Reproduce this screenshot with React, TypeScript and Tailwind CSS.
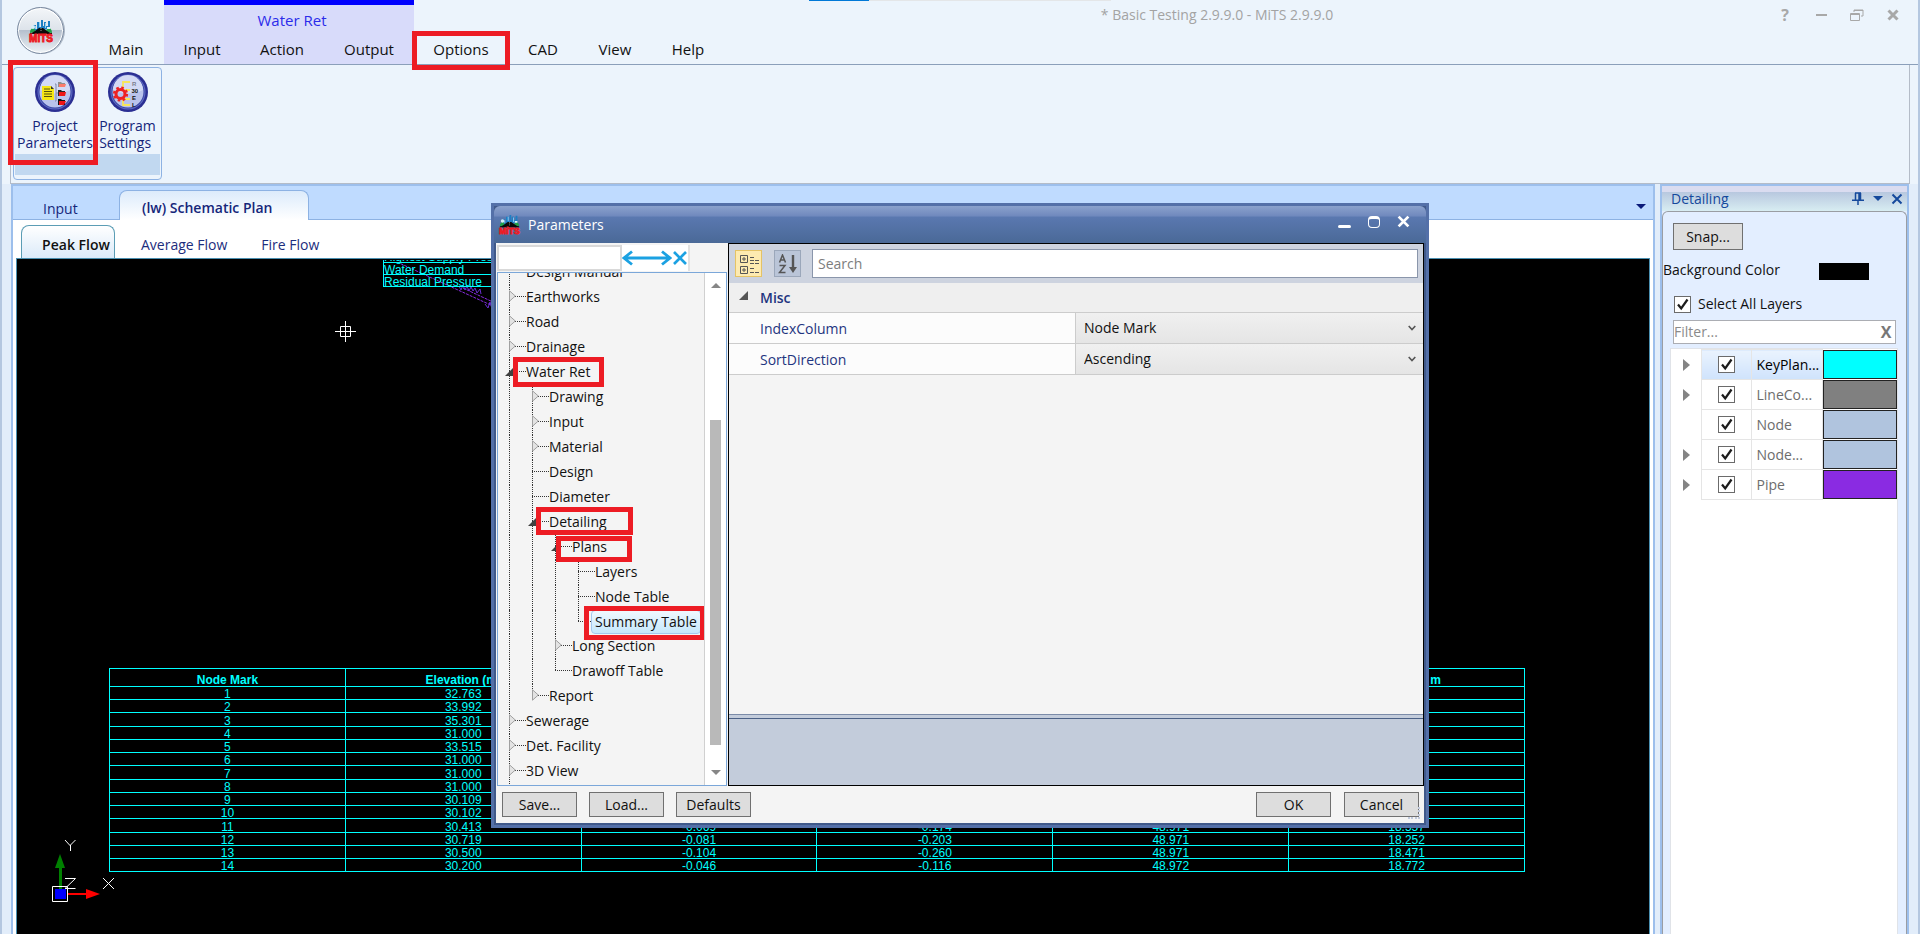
import React from 'react';

interface TreeItem {
  label: string;
  depth: number;
  state?: 'closed' | 'open';
  selected?: boolean;
  mark?: string;
  // the dotted guide of this level stops here
  last?: boolean;
  guides: number[];
}

interface Layer {
  name: string;
  color: string;
  expandable: boolean;
  selected?: boolean;
}

const treeItems: TreeItem[] = [
  { label: 'Design Manual', depth: 0, guides: [0] },
  { label: 'Earthworks', depth: 0, state: 'closed', guides: [0] },
  { label: 'Road', depth: 0, state: 'closed', guides: [0] },
  { label: 'Drainage', depth: 0, state: 'closed', guides: [0] },
  { label: 'Water Ret', depth: 0, state: 'open', guides: [0], mark: '-left-[13px] -top-[3px] w-[91px] h-[30px]' },
  { label: 'Drawing', depth: 1, state: 'closed', guides: [0, 1] },
  { label: 'Input', depth: 1, state: 'closed', guides: [0, 1] },
  { label: 'Material', depth: 1, state: 'closed', guides: [0, 1] },
  { label: 'Design', depth: 1, guides: [0, 1] },
  { label: 'Diameter', depth: 1, guides: [0, 1] },
  { label: 'Detailing', depth: 1, state: 'open', guides: [0, 1], mark: '-left-[13px] -top-[3px] w-[97px] h-[28px]' },
  { label: 'Plans', depth: 2, state: 'open', guides: [0, 1, 2], mark: '-left-[16px] top-px w-[76px] h-[26px]' },
  { label: 'Layers', depth: 3, guides: [0, 1, 2, 3] },
  { label: 'Node Table', depth: 3, guides: [0, 1, 2, 3] },
  { label: 'Summary Table', depth: 3, guides: [0, 1, 2, 3], last: true, selected: true, mark: '-left-[11px] -top-[4px] w-[121px] h-[34px]' },
  { label: 'Long Section', depth: 2, state: 'closed', guides: [0, 1, 2] },
  { label: 'Drawoff Table', depth: 2, guides: [0, 1, 2], last: true },
  { label: 'Report', depth: 1, state: 'closed', guides: [0, 1], last: true },
  { label: 'Sewerage', depth: 0, state: 'closed', guides: [0] },
  { label: 'Det. Facility', depth: 0, state: 'closed', guides: [0] },
  { label: '3D View', depth: 0, state: 'closed', guides: [0] },
];

const layers: Layer[] = [
  { name: 'KeyPlan...', color: '#00ffff', expandable: true, selected: true },
  { name: 'LineCo...', color: '#808080', expandable: true },
  { name: 'Node', color: '#b0c4de', expandable: false },
  { name: 'Node...', color: '#b0c4de', expandable: true },
  { name: 'Pipe', color: '#8a2be2', expandable: true },
];

const summaryHead = ['Node Mark', 'Elevation (m)', '', '', '', 'Pressure, m'];

const summaryRows = [
  ['1', '32.763', '', '', '', ''],
  ['2', '33.992', '', '', '', ''],
  ['3', '35.301', '', '', '', ''],
  ['4', '31.000', '', '', '', ''],
  ['5', '33.515', '', '', '', ''],
  ['6', '31.000', '', '', '', ''],
  ['7', '31.000', '', '', '', ''],
  ['8', '31.000', '', '', '', ''],
  ['9', '30.109', '', '', '', ''],
  ['10', '30.102', '', '', '', ''],
  ['11', '30.413', '-0.069', '-0.174', '48.971', '18.557'],
  ['12', '30.719', '-0.081', '-0.203', '48.971', '18.252'],
  ['13', '30.500', '-0.104', '-0.260', '48.971', '18.471'],
  ['14', '30.200', '-0.046', '-0.116', '48.972', '18.772'],
];

const Highlight: React.FC<{ className: string }> = ({ className }) => (
  <span className={`absolute z-10 border-[5px] border-[#ed1c24] pointer-events-none ${className}`} />
);

const MitsLogo: React.FC<{ className?: string }> = ({ className }) => (
  <svg viewBox="0 0 22 24" className={`overflow-visible ${className ?? ''}`} aria-hidden="true">
    <path d="M3 12V6h3v4h1V3h3v5h1V1h2v6h1V3h2v4h2V2h2v8z" fill="#1d7fc4" />
    <path d="M9 3h1v5H9zM15 4h1v5h-1zM5 7h1v3H5z" fill="#8fd0f2" />
    <path d="M0 14c0-4 2-5 4-5l2 4zM22 14c0-4-2-5-4-5l-3 4z" fill="#20a04a" />
    <circle cx="3" cy="8" r="2" fill="#d9eef7" />
    <path d="M17 8h3v2h-3z" fill="#dff3fb" />
    <path d="M0 15l5-3 4-3h4l4 3 5 3z" fill="#0b0b0b" />
    <path d="M11 9v5" stroke="#fff" strokeWidth="0.6" strokeDasharray="1 1" />
    <path d="M0 14h5l3-1h6l3 1h5v1H0z" fill="#0b0b0b" />
    <text x="11" y="23" textAnchor="middle" fontFamily="Liberation Sans Narrow, Liberation Sans, sans-serif" fontWeight="bold" fontSize="10" fill="#ed1c24" stroke="#ed1c24" strokeWidth="0.9">MiTS</text>
  </svg>
);

const ParametersIcon = () => (
  <svg viewBox="0 0 40 40" className="w-10 h-10" aria-hidden="true">
    <circle cx="20" cy="20" r="20" fill="#2b2f93" />
    <circle cx="20" cy="20" r="17.5" fill="#5f6dc4" />
    <circle cx="20" cy="20" r="16.5" fill="#3a45a5" />
    <circle cx="20" cy="20" r="15.5" fill="#b9c3ec" />
    <path d="M5 18a15 15 0 0 1 30 0c-8 4-20 5-30 0z" fill="#d3daf5" />
    <path d="M7 14h9l3 3v11H7z" fill="#f5e614" />
    <path d="M16 14v3h3z" fill="#333" />
    <path d="M9 17h6M9 19.500h8M9 22h8M9 24.500h8" stroke="#54500c" strokeWidth="1" />
    <path d="M21 12v17M21 12h-1M21 21h2M21 29h-1" stroke="#8088a8" strokeWidth="1" fill="none" />
    <path d="M23 10h3l1 1h3v4h-7z" fill="#8f8f8f" />
    <path d="M24 12h7l-1 3h-6z" fill="#fb7b6b" />
    <path d="M23 18h3l1 1h3v5h-7z" fill="#222" />
    <path d="M24 20h7l-1 4h-6z" fill="#ee1515" />
    <path d="M23 27h3l1 1h3v5h-7z" fill="#111" />
    <path d="M24 29h7l-2 4h-5z" fill="#ee1515" />
  </svg>
);

const SettingsIcon = () => (
  <svg viewBox="0 0 40 40" className="w-10 h-10" aria-hidden="true">
    <circle cx="20" cy="20" r="20" fill="#2b2f93" />
    <circle cx="20" cy="20" r="17.5" fill="#5f6dc4" />
    <circle cx="20" cy="20" r="16.5" fill="#3a45a5" />
    <circle cx="20" cy="20" r="15.5" fill="#b9c3ec" />
    <path d="M5 18a15 15 0 0 1 30 0c-8 4-20 5-30 0z" fill="#d3daf5" />
    <path d="M22 10h-7v6M22 18h-5M22 27h-6M22 33h-7v-7" stroke="#f7e65a" strokeWidth="1.800" fill="none" />
    <circle cx="12.500" cy="22" r="4.500" fill="none" stroke="#ee2222" strokeWidth="3" />
    <circle cx="12.500" cy="22" r="6.500" fill="none" stroke="#ee2222" strokeWidth="2.200" strokeDasharray="2.600 2.500" />
    <g fontFamily="Liberation Sans, sans-serif" fontWeight="bold" fontSize="6" fill="#111">
      <text x="24" y="13.500" fill="#7d8090">R</text>
      <text x="23.500" y="21">30</text>
      <text x="24" y="27.500">E</text>
      <text x="24" y="34.500">L</text>
    </g>
  </svg>
);

const CheckBox: React.FC<{ label?: string; id: string }> = ({ label, id }) => (
  <span className="relative inline-flex w-[17px] h-[17px] shrink-0">
    <input id={id} type="checkbox" defaultChecked aria-label={label} className="appearance-none w-full h-full bg-white border border-[#6b6b6b]" />
    <svg viewBox="0 0 17 17" className="absolute inset-0 pointer-events-none" aria-hidden="true">
      <path d="M4 8.500l3.200 4L13.500 3.500" fill="none" stroke="#1c1c1c" strokeWidth="2.200" />
    </svg>
  </span>
);

const Caret: React.FC<{ className?: string }> = ({ className }) => (
  <svg viewBox="0 0 10 5" className={`w-2.5 h-[5px] ${className ?? ''}`} aria-hidden="true">
    <path d="M0 0h10L5 5z" fill="currentColor" />
  </svg>
);

const Cross: React.FC<{ className?: string; width?: number }> = ({ className, width = 2 }) => (
  <svg viewBox="0 0 12 12" className={className} aria-hidden="true">
    <path d="M1.500 1.500l9 9M10.500 1.500l-9 9" fill="none" stroke="currentColor" strokeWidth={width} />
  </svg>
);

const TitleBar = () => (
  <header className="relative flex items-end h-[65px] shrink-0 border-b border-[#8b9fba] text-[15px] text-[#111]">
    <button aria-label="Application menu" className="absolute left-[15px] top-[7px] w-[47px] h-[47px] rounded-full border border-[#75859c] bg-[linear-gradient(#f3f6f9,#dde3ea_49%,#b5c0ce_50%,#eef3f7)] shadow-[inset_0_0_0_1px_#ffffff,1px_0_0_#a9b4c2] flex items-center justify-center">
      <MitsLogo className="w-[22px] h-6" />
    </button>
    <nav className="flex items-end h-full pl-[86px]">
      <button className="w-[76px] h-8 pt-0.5">Main</button>
      <div className="flex flex-col h-full border-t-[5px] border-[#0000fe] bg-[#d8dbfa]">
        <div className="flex-1 flex items-center justify-center pt-1 pl-1.5 text-[#2b2bea]">Water Ret</div>
        <div className="flex">
          <button className="w-[76px] h-8 pt-0.5">Input</button>
          <button className="w-[84px] h-8 pt-0.5">Action</button>
          <button className="w-[90px] h-8 pt-0.5">Output</button>
        </div>
      </div>
      <button className="relative w-[94px] h-8 pt-0.5">
        Options
        <Highlight className="-left-[2px] -top-px w-[98px] h-[39px]" />
      </button>
      <button className="w-[70px] h-8 pt-0.5">CAD</button>
      <button className="w-[74px] h-8 pt-0.5">View</button>
      <button className="w-[72px] h-8 pt-0.5">Help</button>
    </nav>
    <div className="absolute left-[807px] right-[807px] top-0 h-px bg-[#e4e6e8]">
      <div className="w-[60px] h-full bg-[#0078d7]" />
    </div>
    <h1 className="absolute inset-x-0 top-[5px] pl-[514px] text-center text-sm text-[#a3a3a3] pointer-events-none">* Basic Testing 2.9.9.0 - MiTS 2.9.9.0</h1>
    <div className="absolute right-[17px] top-[7px] flex items-center gap-5 text-[#a8a8a8]">
      <button aria-label="Help" className="w-4 h-4 flex items-center justify-center text-base leading-4 font-bold">?</button>
      <button aria-label="Minimize" className="w-4 h-4 flex items-center justify-center"><span className="w-[11px] h-[2px] bg-[#a8a8a8]" /></button>
      <button aria-label="Restore" className="w-4 h-4 flex items-center justify-center">
        <svg viewBox="0 0 14 13" className="w-[14px] h-[13px]" fill="none" stroke="currentColor">
          <path d="M4 3V1h9v6h-2M4 1.500h9" />
          <path d="M.5 4.500h9v7h-9zM.5 5.500h9" />
        </svg>
      </button>
      <button aria-label="Close" className="w-4 h-4 flex items-center justify-center"><Cross className="w-3 h-3" width={3} /></button>
    </div>
  </header>
);

const Ribbon = () => (
  <section className="mx-2 h-[119px] shrink-0 border-x border-b border-[#b4bcc8] pl-[2px] pt-[2px] flex items-start">
    <div className="flex flex-col h-[113px] border border-[#8db2e3] rounded p-px pb-1 text-sm leading-[17px] text-[#15267a]">
      <div className="flex flex-1">
        <button className="relative w-20 flex flex-col items-center pt-[3px]">
          <ParametersIcon />
          <span className="mt-[5px]">Project<br />Parameters</span>
          <Highlight className="-left-[7px] -top-[9px] w-[90px] h-[105px]" />
        </button>
        <button className="w-[65px] flex flex-col items-center pt-[3px]">
          <SettingsIcon />
          <span className="mt-[5px] text-left">Program<br />Settings</span>
        </button>
      </div>
      <div className="h-[21px] bg-[#c1d8f0]" />
    </div>
  </section>
);

const Canvas = () => (
  <div className="relative flex-1 mx-[3px] border border-b-0 border-[#4a8fb0] bg-black overflow-hidden font-['Liberation_Sans',sans-serif] text-xs text-[#00ffff]">
    <svg className="absolute left-[370px] top-[3px] w-[120px] h-[60px]" viewBox="0 0 120 60" fill="none" aria-hidden="true">
      <path d="M10 0L108 45M76 26L108 41" stroke="#8a2be2" strokeWidth="1" strokeDasharray="3 1" />
      <path d="M72 24l2 4 2-5 2 5 2-4 2 5 2-4 2 4 2-3 2 5 3-4 1 5M98 42l3 4 2-6 2 7 3-5 2 7" stroke="#6a2fd0" strokeWidth="1" />
    </svg>
    <div className="absolute left-[366px] top-px w-[200px] h-[27px] overflow-hidden flex flex-col justify-end border-b border-l border-[#00ffff]">
      <div className="h-3 leading-[14px] shrink-0">Highest Supply Pressure</div>
      <div className="h-3 leading-[14px] shrink-0 border-t border-[#00ffff]">Water Demand</div>
      <div className="h-3 leading-[14px] shrink-0 border-t border-[#00ffff]">Residual Pressure</div>
    </div>
    <svg className="absolute left-[318px] top-[62px] w-[21px] h-[21px]" viewBox="0 0 21 21" fill="none" stroke="#fff" aria-hidden="true">
      <path d="M10.500 0v21M0 10.500h21M5.500 5.500h10v10h-10z" />
    </svg>
    <table className="absolute left-[92px] top-[409px] w-[1416px] table-fixed border-collapse border border-[#00ffff] text-center leading-[10px]">
      <thead>
        <tr className="h-[18px]">
          {summaryHead.map((head, i) => (
            <th key={i} className="p-0 pt-1 border border-[#00ffff] font-bold">{head}</th>
          ))}
        </tr>
      </thead>
      <tbody>
        {summaryRows.map((row, i) => (
          <tr key={i} className={i % 4 === 2 ? 'h-[14px]' : 'h-[13px]'}>
            {row.map((cell, j) => (
              <td key={j} className="p-0 pt-[2px] border border-[#00ffff]">{cell}</td>
            ))}
          </tr>
        ))}
      </tbody>
    </table>
    <svg className="absolute left-[34px] top-[580px] w-[66px] h-[64px]" viewBox="51 839 66 64" fill="none" aria-hidden="true">
      <path d="M60.500 866v23" stroke="#008000" strokeWidth="3" />
      <path d="M60 854l5 14H55z" fill="#008000" />
      <path d="M67 894h20" stroke="#f00" strokeWidth="2" />
      <path d="M86 889l14 5-14 5z" fill="#f00" />
      <path d="M52.500 886.500h15v15h-15z" stroke="#fff" />
      <path d="M55 889h11v10H55z" fill="#00f" />
      <path d="M65 840l5 5.500 5.500-5.500M70.500 845v6M65 878.500h10.500L65 888.500h10.500M103 878l11 11M114 878l-11 11" stroke="#fff" />
    </svg>
  </div>
);

const Workspace = () => (
  <main className="flex-1 min-w-0 flex flex-col border-x-2 border-t-2 border-[#9dbfec] bg-white">
    <div className="flex h-[34px] shrink-0 items-end bg-[#bfdbff] text-sm text-[#15267a]">
      <div className="w-[106px] h-full border-b border-[#8db2e3] flex items-center pl-[30px] pt-3"><button>Input</button></div>
      <button className="w-[190px] h-[30px] pl-[22px] pt-1 text-left font-semibold border border-b-0 border-[#8db2e3] rounded-t-lg bg-[linear-gradient(#dcebfb,#ffffff)]">
        (lw) Schematic Plan
      </button>
      <div className="flex-1 h-full border-b border-[#8db2e3] flex items-center justify-end pr-[7px] pt-2">
        <button aria-label="Open documents"><Caret className="text-[#0a1a7a]" /></button>
      </div>
    </div>
    <div className="flex h-[38px] shrink-0 items-end pl-2 text-sm text-[#1c2d7d]">
      <button className="w-[94px] h-[33px] pl-4 pt-1.5 border border-b-0 border-[#5b9db5] rounded-t-lg bg-[linear-gradient(#ffffff,#dbeaf9)] font-semibold text-[#111] whitespace-nowrap">
        Peak Flow
      </button>
      <button className="ml-[26px] h-[30px] pt-[3px]">Average Flow</button>
      <button className="ml-[34px] h-[30px] pt-[3px]">Fire Flow</button>
    </div>
    <Canvas />
  </main>
);

const DetailingPanel = () => (
  <aside className="w-[249px] shrink-0 flex flex-col border-x-2 border-t-2 border-[#9dbfec] bg-[#e3eeff] text-sm text-[#111]">
    <div className="flex items-center h-[25px] shrink-0 pl-[9px] pr-1 bg-[linear-gradient(#dadcf0_24%,#b8c8df_25%,#d8edf2)] text-[#15499c]">
      <h2 className="flex-1">Detailing</h2>
      <button aria-label="Pin" className="mr-[9px]">
        <svg viewBox="0 0 12 13" className="w-3 h-[13px]" fill="none" stroke="currentColor" strokeWidth="1.500" aria-hidden="true">
          <path d="M3 1h6M3.500 1v7M8.500 1v7M7 1v7M0 8.200h12M6 8v5" />
        </svg>
      </button>
      <button aria-label="Panel menu" className="mr-2"><Caret /></button>
      <button aria-label="Close panel"><Cross className="w-3 h-3" width={2} /></button>
    </div>
    <div className="flex-1 flex flex-col border border-b-0 border-[#9a9da3] rounded-t-md">
      <button className="ml-2.5 mt-[11px] w-[70px] h-[27px] border border-[#707070] bg-[#dddddd]">Snap...</button>
      <div className="mt-[9px] flex items-center h-[22px]">
        <span className="w-[156px] whitespace-nowrap">Background Color</span>
        <button aria-label="Background Color" className="w-[50px] h-[17px] mt-[2px] bg-black" />
      </div>
      <div className="mt-3 ml-[11px] flex items-center gap-[7px] h-[22px]">
        <CheckBox id="all-layers" />
        <label htmlFor="all-layers">Select All Layers</label>
      </div>
      <div className="ml-2.5 mr-2.5 mt-[5px] flex h-6 border border-[#abadb3] bg-white">
        <input aria-label="Filter layers" placeholder="Filter..." className="flex-1 min-w-0 outline-none placeholder:text-[#8a8a8a]" />
        <button aria-label="Clear filter" className="w-[18px] text-base leading-[22px] font-bold text-[#777]">X</button>
      </div>
      <div className="flex-1 mt-1 ml-[7px] mr-2 border-t border-x border-[#e0e3e8] bg-white">
        <table className="w-full table-fixed border-collapse">
          <colgroup>
            <col className="w-[30px]" />
            <col className="w-[50px]" />
            <col />
            <col className="w-[75px]" />
          </colgroup>
          <tbody>
            {layers.map((layer) => (
              <tr key={layer.name} className={layer.selected ? 'h-[30px] text-black' : 'h-[30px] text-[#6d6d6d]'}>
                <td className="p-0">
                  {layer.expandable && (
                    <button aria-label={`Expand ${layer.name}`} className="block ml-3">
                      <svg viewBox="0 0 7 12" className="w-[7px] h-3" aria-hidden="true"><path d="M0 0l7 6-7 6z" fill="#848484" /></svg>
                    </button>
                  )}
                </td>
                <td className={`p-0 border border-[#e5e5e5] ${layer.selected ? 'bg-[linear-gradient(#eaf3fe,#cfe3fc)]' : ''}`}>
                  <div className="flex justify-center"><CheckBox id={`layer-${layer.name}`} label={layer.name} /></div>
                </td>
                <td className={`p-0 pl-[5px] border border-[#e5e5e5] whitespace-nowrap ${layer.selected ? 'bg-[linear-gradient(#eaf3fe,#cfe3fc)]' : ''}`}>{layer.name}</td>
                <td className="p-0">
                  <button aria-label={`${layer.name} color`} className="block w-full h-[29px] border border-[#222]" style={{ backgroundColor: layer.color }} />
                </td>
              </tr>
            ))}
          </tbody>
        </table>
      </div>
    </div>
  </aside>
);

const Expander: React.FC<{ state: 'closed' | 'open' }> = ({ state }) =>
  state === 'closed' ? (
    <svg viewBox="0 0 7 12" className="absolute left-0 top-[5px] w-[7px] h-3" aria-hidden="true">
      <path d="M.5 .8L6.300 6 .5 11.200z" fill="#e3e3e3" stroke="#a0a0a0" />
    </svg>
  ) : (
    <svg viewBox="0 0 8 8" className="absolute -left-1 top-2 w-2 h-2" aria-hidden="true">
      <path d="M8 0v8H0z" fill="#404040" />
    </svg>
  );

const TreeRow: React.FC<{ item: TreeItem }> = ({ item }) => (
  <li className={`flex shrink-0 pl-[11px] ${item.selected ? 'h-6' : 'h-[25px]'}`}>
    {item.guides.map((level) => (
      <span key={level} className={level === item.depth ? 'relative w-[17px]' : 'relative w-[23px]'}>
        <span className={`absolute left-0 top-0 border-l border-dotted border-[#333] ${level === item.depth && item.last ? 'h-[11px]' : 'h-full'}`} />
        {level === item.depth && <span className="absolute left-0 right-0 top-[11px] border-t border-dotted border-[#333]" />}
        {level === item.depth && item.state && <Expander state={item.state} />}
      </span>
    ))}
    <span className="relative whitespace-nowrap leading-6">
      {item.selected && <span className="absolute -left-1 -right-1 top-0 bottom-0 border border-[#a4c8ee] rounded-sm bg-[linear-gradient(#f0f8fe,#c5e8fc)]" />}
      <button className="relative">{item.label}</button>
      {item.mark && <Highlight className={item.mark} />}
    </span>
  </li>
);

const PropertyRow: React.FC<{ name: string; options: string[] }> = ({ name, options }) => (
  <div className="flex h-[31px] border-b border-[#cccccc] bg-[#fcfcfc]">
    <label htmlFor={name} className="w-[347px] shrink-0 pl-[31px] leading-[31px] text-[#1f3580] border-r border-[#cccccc]">{name}</label>
    <div className="relative flex-1">
      <select id={name} className="appearance-none w-full h-full pl-2 outline-none bg-[linear-gradient(#f0f0f0,#e5e5e5)] text-[#111]">
        {options.map((option) => (
          <option key={option}>{option}</option>
        ))}
      </select>
      <svg viewBox="0 0 8 6" className="absolute right-[7px] top-3 w-2 h-1.5 pointer-events-none" aria-hidden="true">
        <path d="M.7 1l3.300 3.500L7.300 1" fill="none" stroke="#555" strokeWidth="1.600" />
      </svg>
    </div>
  </div>
);

const DialogButton: React.FC<{ children: string }> = ({ children }) => (
  <button className="w-[75px] h-[25px] border border-[#707070] bg-[#dddddd] leading-[22px]">{children}</button>
);

const ParametersDialog = () => (
  <div role="dialog" aria-label="Parameters" className="absolute z-20 left-[489px] top-[203px] w-[938px] h-[625px] flex flex-col border-[3px] border-[#5470a8] bg-[#40598a] text-sm text-[#111]">
    <div className="flex items-center h-[37px] shrink-0 pl-[5px] pr-4 rounded-t-md bg-[linear-gradient(#8ba2cc,#7089bd_27%,#5a78b0_30%,#4a6997)] text-white">
      <MitsLogo className="w-[21px] h-[21px]" />
      <h2 className="flex-1 ml-[8px]">Parameters</h2>
      <div className="flex items-center gap-[17px] mb-1.5">
        <button aria-label="Minimize dialog" className="w-[13px] h-3 flex items-end"><span className="w-full h-[3px] rounded-sm bg-white" /></button>
        <button aria-label="Maximize dialog" className="w-3 h-3 rounded-sm border border-t-[3px] border-white" />
        <button aria-label="Close dialog"><Cross className="w-[13px] h-[13px]" width={2.6} /></button>
      </div>
    </div>
    <div className="flex-1 min-h-0 mx-[2px] mb-[2px] flex flex-col bg-[#f4f4f4]">
      <div className="flex flex-1 min-h-0">
        <div className="w-[232px] shrink-0 flex flex-col pl-px pr-px">
          <div className="flex items-center h-[29px] shrink-0">
            <input aria-label="Find parameter" className="w-[125px] h-[26px] border-2 border-[#d9d9d9] bg-white outline-none" />
            <div className="flex items-center h-[26px] bg-white border-r-2 border-[#e2e2e2] text-[#1ba1e2]">
              <button aria-label="Fit width">
                <svg viewBox="0 0 50 16" className="w-[50px] h-4" fill="none" stroke="currentColor" strokeWidth="2.800" aria-hidden="true">
                  <path d="M2 8h46M10 1.500L2 8l8 6.500M40 1.500L48 8l-8 6.500" />
                </svg>
              </button>
              <button aria-label="Clear"><Cross className="w-4 h-4" width={2} /></button>
            </div>
          </div>
          <div className="flex flex-1 min-h-0 border border-[#7ba7d9]">
            <ul className="flex-1 flex flex-col justify-end overflow-hidden pb-px">
              {treeItems.map((item) => (
                <TreeRow key={item.label + item.depth} item={item} />
              ))}
            </ul>
            <div className="w-[22px] shrink-0 flex flex-col items-center py-[10px] border-l border-[#d0d0d0] bg-white text-[#868686]">
              <Caret className="rotate-180 w-2 h-1" />
              <div className="w-[11px] mt-[132px] mb-[25px] flex-1 bg-[#b9b9b9]" />
              <Caret className="w-2 h-1" />
            </div>
          </div>
        </div>
        <div className="flex-1 min-w-0 flex flex-col border border-black">
          <div className="flex items-center h-[39px] shrink-0 pl-[6px] pr-[5px] bg-[#cdd3df]">
            <button aria-label="Categorized" className="w-[27px] h-[27px] flex items-center justify-center border border-[#e5c365] bg-[#fdeab0] text-[#555]">
              <svg viewBox="0 0 20 20" className="w-5 h-5" fill="none" stroke="currentColor" aria-hidden="true">
                <path d="M1.500 1.500h7v7h-7zM1.500 12.500h7v7h-7zM3 5h4M5 3v4M3 16h4M5 14v4M11 3.500h4M11 6.500h4M11 9.500h4M16 6.500h4M16 9.500h4M11 14.500h4M11 18.500h4M16 18.500h4" />
              </svg>
            </button>
            <button aria-label="Sort alphabetically" className="ml-3 w-[27px] h-[27px] flex items-center justify-center border border-[#9ba7ba] bg-[#bac5d8] text-[#555]">
              <svg viewBox="0 0 20 20" className="w-5 h-5" aria-hidden="true">
                <path d="M1.500 8.500L4.500 1l3 7.500M2.500 6h4M1.500 11.500h5.500L1.500 18.500h6" fill="none" stroke="currentColor" strokeWidth="1.500" />
                <path d="M15 1v14" stroke="currentColor" strokeWidth="2.400" />
                <path d="M11 13h8l-4 6z" fill="currentColor" />
              </svg>
            </button>
            <input aria-label="Search properties" placeholder="Search" className="ml-[11px] flex-1 min-w-0 h-[29px] pl-[5px] border border-[#8a96ab] bg-white outline-none placeholder:text-[#7d7d7d]" />
          </div>
          <div className="flex items-center h-[30px] shrink-0 pl-[10px] border-b border-[#cccccc] bg-[#efefef] font-semibold text-[#1f3580]">
            <svg viewBox="0 0 9 9" className="w-[9px] h-[9px] mr-3 -mt-1" aria-hidden="true"><path d="M9 0v9H0z" fill="#555" /></svg>
            Misc
          </div>
          <PropertyRow name="IndexColumn" options={['Node Mark']} />
          <PropertyRow name="SortDirection" options={['Ascending', 'Descending']} />
          <div className="flex-1" />
          <div className="h-[5px] shrink-0 border-t border-b border-t-[#7b8ba8] border-b-[#4b6186] bg-[#c3ccdb]" />
          <div className="h-[66px] shrink-0 bg-[#c3ccdb]" />
        </div>
      </div>
      <div className="relative flex items-center h-[37px] shrink-0 pl-1.5 pr-[5px]">
        <div className="flex gap-[12px]">
          <DialogButton>Save...</DialogButton>
          <DialogButton>Load...</DialogButton>
          <DialogButton>Defaults</DialogButton>
        </div>
        <div className="ml-auto flex gap-[13px]">
          <DialogButton>OK</DialogButton>
          <DialogButton>Cancel</DialogButton>
        </div>
        <span className="absolute right-1 bottom-1 w-3 h-3 border-r-2 border-b-2 border-dotted border-[#c0c9dc]" />
      </div>
    </div>
  </div>
);

const App: React.FC = () => {
  return (
    <div className="relative flex flex-col h-screen overflow-hidden border-x-2 border-[#b4c7e0] bg-[#ecf4fc] font-['Open_Sans',sans-serif]">
      <TitleBar />
      <Ribbon />
      <div className="flex flex-1 min-h-0 gap-[5px] px-[9px] bg-[#e2edfa]">
        <Workspace />
        <DetailingPanel />
      </div>
      <ParametersDialog />
    </div>
  );
};

export default App;
